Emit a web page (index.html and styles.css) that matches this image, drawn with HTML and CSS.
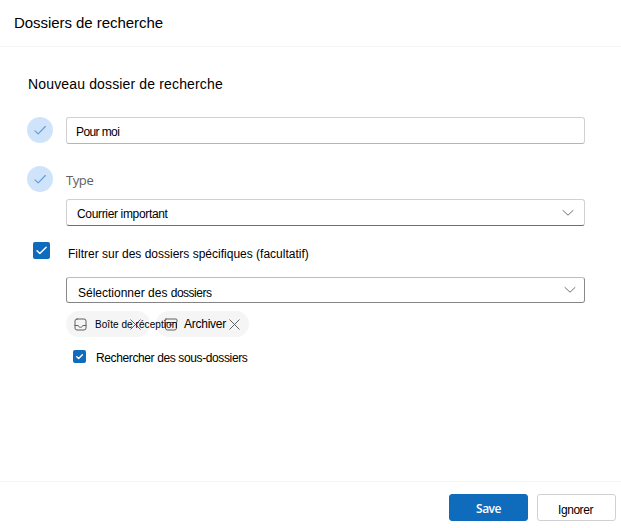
FILE: index.html
```html
<!DOCTYPE html>
<html lang="fr">
<head>
<meta charset="utf-8">
<title>Dossiers de recherche</title>
<link rel="stylesheet" href="styles.css">
</head>
<body>
<div class="dialog">
  <header class="header"><h1 class="title"><span>Dossiers de recherche</span></h1></header>
  <main class="content">
    <h2 class="subtitle"><span>Nouveau dossier de recherche</span></h2>
    <div class="row row-name">
      <span class="step"><svg width="26" height="26" viewBox="0 0 26 26"><path d="M8 13.8l3.2 3L18.3 9.5"/></svg></span>
      <div class="field field-name"><span class="t-name">Pour moi</span></div>
    </div>
    <div class="row row-type">
      <span class="step"><svg width="26" height="26" viewBox="0 0 26 26"><path d="M8 13.8l3.2 3L18.3 9.5"/></svg></span>
      <span class="type-label">Type</span>
    </div>
    <div class="field field-type">
      <span class="t-type">Courrier important</span>
      <svg class="chevron" width="12" height="8" viewBox="0 0 12 8"><path d="M1 1.5l5 4.7 5-4.7"/></svg>
    </div>
    <div class="row row-filter">
      <span class="check"><svg width="17" height="17" viewBox="0 0 17 17"><path d="M4 8.8l2.8 2.8 6.4-6.3"/></svg></span>
      <span class="t-filter">Filtrer sur des dossiers spécifiques (facultatif)</span>
    </div>
    <div class="field field-folders">
      <span class="t-folders">Sélectionner des <span class="t-tight">dossiers</span></span>
      <svg class="chevron" width="12" height="8" viewBox="0 0 12 8"><path d="M1 1.5l5 4.7 5-4.7"/></svg>
    </div>
    <div class="chips">
      <div class="chip chip-inbox">
        <svg width="13" height="13" viewBox="0 0 13 13"><rect x="1" y="1" width="11" height="11" rx="2"/><path d="M1 7.5h3.2c.3 2.4 4.3 2.4 4.6 0H12"/></svg>
        <span class="t-inbox">Boîte de réception</span>
        <svg class="close" width="11" height="11" viewBox="0 0 11 11"><path d="M.8.8l9.4 9.4M10.2.8L.8 10.2"/></svg>
      </div>
      <div class="chip chip-archive">
        <svg width="14" height="13" viewBox="0 0 14 13"><rect x="1" y="1" width="12" height="3.5" rx="1"/><path d="M1.500 4.500V10q0 2 2 2h7q2 0 2-2V4.500M5.500 6.800h3"/></svg>
        <span class="t-archive">Archiver</span>
        <svg class="close" width="11" height="11" viewBox="0 0 11 11"><path d="M.8.8l9.4 9.4M10.2.8L.8 10.2"/></svg>
      </div>
    </div>
    <div class="row row-sub">
      <span class="check check-small"><svg width="13" height="13" viewBox="0 0 13 13"><path d="M3.7 6.700l2 1.900 3.700-3.900"/></svg></span>
      <span class="t-sub">Rechercher des sous-dossiers</span>
    </div>
  </main>
  <footer class="footer">
    <button class="button primary">Save</button>
    <button class="button"><span class="t-ignore">Ignorer</span></button>
  </footer>
</div>
</body>
</html>
```

FILE: styles.css
```css
* { box-sizing: border-box; }
body {
  margin: 0;
  background: #fff;
  color: #000;
  font-family: "Liberation Sans", Arial, sans-serif;
  font-size: 12px;
}
svg { display: block; flex: none; fill: none; stroke-linecap: round; stroke-linejoin: round; }
.dialog { width: 621px; height: 528px; display: flex; flex-direction: column; overflow: hidden; white-space: nowrap; }
.header { height: 47px; padding: 14px 14px 0; border-bottom: 1px solid #f5f5f5; }
.title, .subtitle { margin: 0; font-weight: 400; }
.title { font-size: 15px; line-height: 18px; letter-spacing: -0.05px; }
.content { flex: 1; padding: 28px 36px 0 27px; }
.subtitle { font-size: 14px; line-height: 18px; padding-left: 1px; letter-spacing: 0.15px; }
.row { display: flex; align-items: center; }
.row-name { margin-top: 24px; height: 27px; align-items: flex-start; }
.row-type { margin-top: 22px; height: 26px; }
.step { width: 26px; height: 26px; border-radius: 50%; background: #cfe4fa; margin-right: 13px; flex: none; }
.step path { stroke: #5c9bd3; stroke-width: 1.1; }
.type-label { font: 13px/18px "Open Sans", sans-serif; color: #616161; padding-top: 1px; letter-spacing: -0.4px; }
.field {
  display: flex; align-items: center; justify-content: space-between;
  width: 519px; height: 27px; margin-left: 39px;
  border: 1px solid #d1d1d1; border-radius: 3px;
}
.field-name { margin-left: 0; border-bottom-color: #b5b5b5; padding: 2px 0 0 9px; }
.field-type { margin-top: 7px; border-bottom-color: #707070; padding: 0 10px; }
.field-folders { margin-top: 18px; height: 26px; border-color: #bdbdbd #8a8a8a #858585; padding: 0 8px 0 11px; }
.chevron { stroke: #707070; stroke-width: 1; }
.t-name { letter-spacing: -0.6px; }
.t-type { padding-top: 2px; letter-spacing: -0.34px; }
.t-folders { padding-top: 6px; }
.t-tight { letter-spacing: -0.5px; }
.row-filter { margin-top: 16px; height: 17px; }
.check { width: 17px; height: 17px; border-radius: 2px; background: #0f6cbd; margin: 0 18px 0 6px; flex: none; }
.check path { stroke: #fff; stroke-width: 1.4; }
.t-filter { padding-top: 6px; }
.chips { display: flex; gap: 6px; margin: 8px 0 0 39px; }
.chip { position: relative; display: flex; align-items: center; height: 26px; border-radius: 13px; background: #f5f5f5; padding-left: 8px; }
.chip svg { stroke: #616161; stroke-width: 1; }
.chip-inbox { width: 84px; }
.chip-archive { width: 93px; }
.t-inbox { position: relative; z-index: 1; margin-left: 8px; font-size: 10px; padding-top: 1px; letter-spacing: 0.06px; }
.chip-inbox .close { position: absolute; left: 64px; top: 8px; }
.t-archive { margin-left: 6px; letter-spacing: -0.25px; }
.chip-archive .close { margin-left: 3px; }
.row-sub { margin-top: 13px; height: 13px; }
.check-small { width: 13px; height: 13px; margin: 0 10px 0 46px; }
.t-sub { padding-top: 2px; letter-spacing: -0.38px; }
.footer { height: 47px; border-top: 1px solid #f5f5f5; display: flex; justify-content: flex-end; gap: 9px; padding: 12px 5px 0 0; }
.button { width: 79px; height: 27px; border: 1px solid #d1d1d1; border-radius: 3px; background: #fff; color: #000; font: 12px "Liberation Sans", Arial, sans-serif; padding: 0; }
.primary { border-color: #0f6cbd; background: #0f6cbd; color: #fff; font: 600 12px "Open Sans", sans-serif; padding-top: 1px; letter-spacing: -0.5px; }
.t-ignore { position: relative; top: 2px; left: -1px; letter-spacing: -0.45px; }
```
